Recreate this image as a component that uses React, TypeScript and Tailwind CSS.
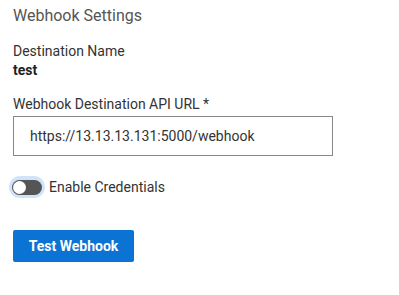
function App() {
  return (
    <div className="w-[399px] h-[295px] bg-white px-[13px] pt-[5px] font-['Roboto',sans-serif]">
      <p className="text-[16px] leading-[22px] text-[#555]">Webhook Settings</p>
      <div className="mt-[15px]">
        <p className="text-[14px] leading-[18px] text-[#333]">Destination Name</p>
        <p className="text-[14px] leading-[18px] font-bold text-[#222] mt-[1px]">test</p>
      </div>
      <div className="mt-[16px]">
        <p className="text-[14px] leading-[18px] text-[#333]">Webhook Destination API URL *</p>
        <input
          type="text"
          defaultValue="https://13.13.13.131:5000/webhook"
          className="mt-[3px] w-[320px] h-[40px] border border-[#888] px-[16px] text-[14px] text-[#333] outline-none"
        />
      </div>
      <div className="mt-[20px] flex items-center gap-[4px]">
        <div className="w-[36px] h-[22px] -ml-[4px] rounded-full bg-[#cfe4fb] flex items-center justify-center">
          <div className="w-[30px] h-[15px] rounded-full bg-[#555] flex items-center p-[1px]">
            <div className="w-[13px] h-[13px] rounded-full bg-white"></div>
          </div>
        </div>
        <span className="text-[14px] text-[#333]">Enable Credentials</span>
      </div>
      <button className="mt-[32px] w-[121px] h-[32px] rounded-[2px] bg-[#0a73d4] text-white text-[14px] font-bold">
        Test Webhook
      </button>
    </div>
  );
}

export default App;
